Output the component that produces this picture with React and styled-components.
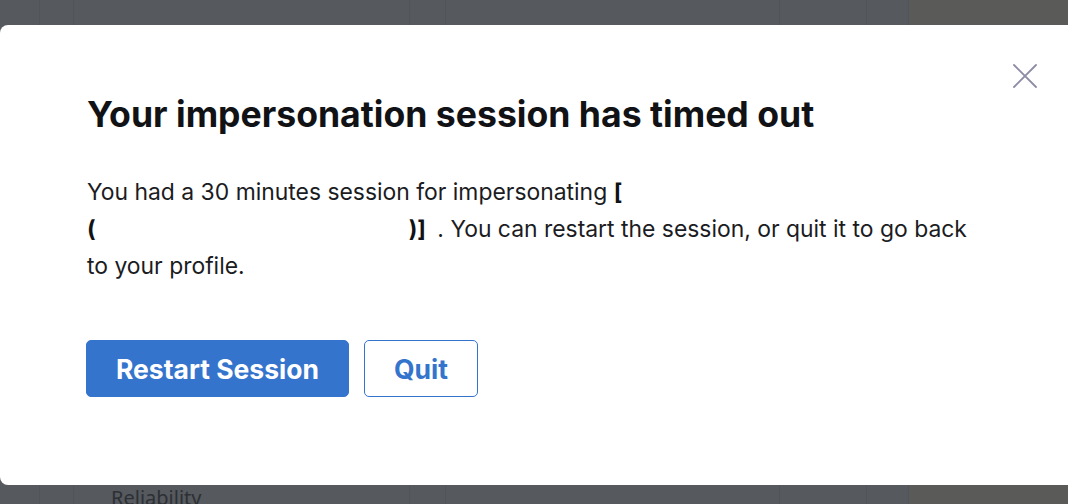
import React from "react";
import styled, { createGlobalStyle } from "styled-components";

const Global = createGlobalStyle`
  html, body { margin: 0; padding: 0; }
  body { font-family: Inter, "Noto Sans", sans-serif; background: #56595e; }
`;

const Page = styled.div`
  position: relative;
  width: 1068px;
  height: 504px;
  overflow: hidden;
  background: #56595e;
`;

const Under = styled.div`
  display: grid;
  grid-template-columns: 40px 34px 336px 36px 334px 87px 42px 1fr;
  height: 100%;
`;

const UnderCol = styled.div`
  border-right: 1px solid ${(p) => (p.$none ? "transparent" : "#51545a")};
  background: ${(p) => p.$bg || "transparent"};
  display: flex;
  flex-direction: column;
  justify-content: flex-end;
  min-width: 0;
`;

const UnderLabel = styled.div`
  font-family: "Noto Sans", sans-serif;
  font-size: 20px;
  color: #2c3035;
  padding-left: 71px;
  line-height: 26px;
  margin-bottom: -7px;
  white-space: nowrap;
`;

const Modal = styled.div`
  position: absolute;
  left: 0;
  top: 25px;
  width: 1100px;
  height: 460px;
  box-sizing: border-box;
  background: #ffffff;
  border-radius: 8px;
  padding: 69px 86px 0 87px;
`;

const Close = styled.button`
  position: absolute;
  left: 1009px;
  top: 35px;
  width: 32px;
  height: 32px;
  padding: 0;
  border: 0;
  background: transparent;
  display: flex;
  align-items: center;
  justify-content: center;
`;

const Title = styled.h2`
  margin: 0;
  font-size: 35.6px;
  line-height: 42px;
  font-weight: 700;
  color: #111215;
`;

const Body = styled.p`
  margin: 38px 0 0;
  width: 890px;
  font-size: 22.9px;
  line-height: 37px;
  color: #1b1c1f;
`;

const Bold = styled.b`
  font-weight: 700;
  color: #111215;
  white-space: nowrap;
  margin-right: ${(p) => p.$gap || 0}px;
`;

const Redact = styled.span`
  display: inline-block;
  width: ${(p) => p.$w}px;
  height: 1px;
`;

const Actions = styled.div`
  display: flex;
  gap: 15px;
  margin-top: 55px;
  margin-left: -1px;
`;

const Button = styled.button`
  height: 57px;
  box-sizing: border-box;
  padding: 0 29px;
  border-radius: 5px;
  border: 1px solid #3574cc;
  background: ${(p) => (p.$primary ? "#3574cc" : "#ffffff")};
  color: ${(p) => (p.$primary ? "#ffffff" : "#3574cc")};
  font-family: Inter, sans-serif;
  font-weight: 700;
  font-size: 26.5px;
  cursor: pointer;
`;

export default function App() {
  return (
    <Page>
      <Global />
      <Under>
        <UnderCol />
        <UnderCol>
          <UnderLabel>Reliability</UnderLabel>
        </UnderCol>
        <UnderCol />
        <UnderCol />
        <UnderCol />
        <UnderCol />
        <UnderCol />
        <UnderCol $none $bg="#5a5b59" />
      </Under>
      <Modal>
        <Close aria-label="Close">
          <svg width="26" height="26" viewBox="0 0 26 26">
            <path d="M2 2 L24 24 M24 2 L2 24" stroke="#8d8ca6" strokeWidth="1.8" strokeLinecap="round" />
          </svg>
        </Close>
        <Title>Your impersonation session has timed out</Title>
        <Body>
          You had a 30 minutes session for impersonating{" "}
          <Bold>
            [<Redact $w={180} />
          </Bold>{" "}
          <Bold $gap={5}>
            (<Redact $w={313} />)]
          </Bold>{" "}
          . You can restart the session, or quit it to go back to your profile.
        </Body>
        <Actions>
          <Button $primary>Restart Session</Button>
          <Button>Quit</Button>
        </Actions>
      </Modal>
    </Page>
  );
}
